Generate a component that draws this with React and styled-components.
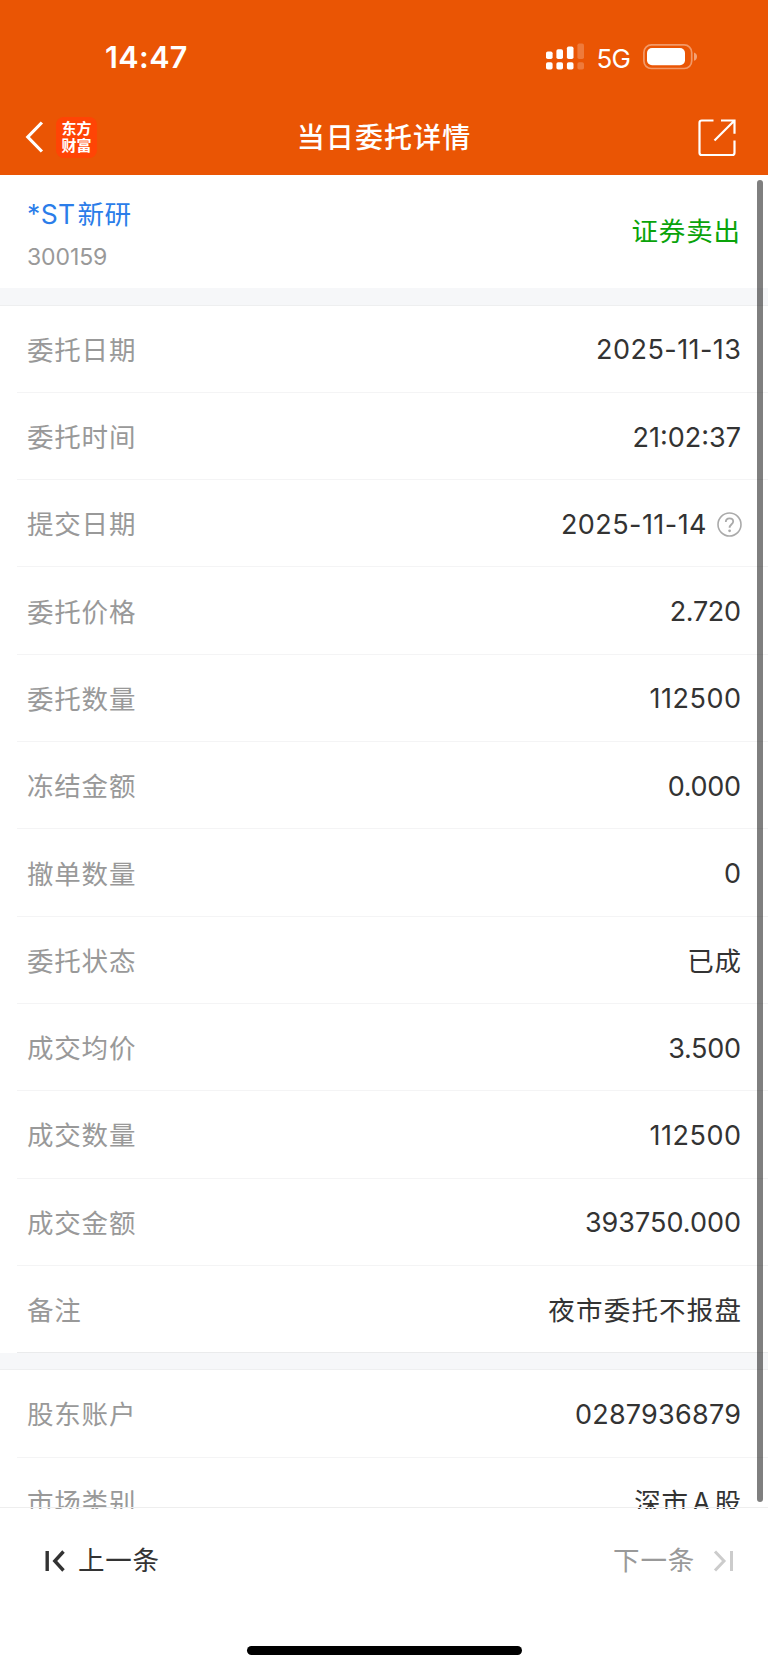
import React from "react";
import styled, { createGlobalStyle } from "styled-components";

const Global = createGlobalStyle`
  * { box-sizing: border-box; }
  body { margin: 0; background: #fff; }
`;

const Screen = styled.div`
  position: relative;
  display: flex;
  flex-direction: column;
  width: 768px;
  height: 1669px;
  overflow: hidden;
  background: #fff;
  color: #333;
  font-family: Inter, "Noto Sans CJK SC", sans-serif;
`;

const Top = styled.header`
  flex: none;
  height: 175px;
  background: #ea5504;
  color: #fff;
`;

const StatusBar = styled.div`
  display: flex;
  align-items: center;
  justify-content: space-between;
  height: 114px;
  padding: 0 70px 0 105px;
`;

const Clock = styled.div`
  padding-bottom: 2px;
  font-size: 30.5px;
  font-weight: 600;
  letter-spacing: 0.4px;
`;

const StatusIcons = styled.div`
  display: flex;
  align-items: center;
`;

const Network = styled.span`
  margin: 3px 13px 0 11.5px;
  font-size: 26px;
  letter-spacing: -0.8px;
`;

const NavBar = styled.div`
  display: grid;
  grid-template-columns: 1fr auto 1fr;
  align-items: center;
  height: 46px;
  padding: 0 32px 0 25px;
`;

const NavLeft = styled.div`
  display: flex;
  align-items: center;
  gap: 12px;
`;

const Logo = styled.div`
  display: flex;
  flex-direction: column;
  align-items: center;
  justify-content: center;
  width: 41px;
  height: 41px;
  padding-bottom: 3px;
  border-radius: 8px;
  background: #ff4405;
  font: 700 15px/17px "Noto Sans CJK SC", sans-serif;
`;

const Title = styled.h1`
  margin: 2px 0 0 7px;
  font-size: 28px;
  font-weight: 500;
  line-height: 40px;
  letter-spacing: 1.1px;
`;

const NavRight = styled.div`
  display: flex;
  justify-content: flex-end;
`;

const Content = styled.main`
  flex: none;
  height: 1334px;
  overflow: hidden;
`;

const Stock = styled.section`
  display: flex;
  align-items: center;
  justify-content: space-between;
  height: 113.4px;
  padding: 0 27px;
`;

const StockInfo = styled.div`
  padding-top: 6px;
`;

const StockName = styled.div`
  display: flex;
  gap: 2px;
  color: #2b7de9;
  font-size: 26.5px;
  line-height: 38px;
  letter-spacing: 0.4px;
`;

const StockCode = styled.div`
  margin-top: 6px;
  color: #999;
  font-size: 23px;
  line-height: 36px;
  letter-spacing: -0.1px;
`;

const Side = styled.div`
  padding-bottom: 4px;
  color: #0aa30a;
  font-size: 26.5px;
  letter-spacing: 0.9px;
`;

const Strip = styled.div`
  height: 17.2px;
  background: #f6f7f9;
  border-bottom: 1px solid #eeeff0;
`;

const Row = styled.div`
  display: flex;
  align-items: center;
  justify-content: space-between;
  height: 87.3px;
  margin-left: 17px;
  padding: 0 27px 0 10px;
  border-bottom: 1px solid ${(p) => (p.$last ? "#eaebec" : "#f4f4f5")};
`;

const Label = styled.span`
  padding-bottom: 1px;
  color: #999;
  font-size: 26.5px;
  letter-spacing: 0.8px;
`;

const Value = styled.span`
  display: flex;
  align-items: center;
  gap: 10px;
  padding: ${(p) => (p.$cjk ? "0 0 1px" : "2px 0 0")};
  margin-right: ${(p) => (p.$help ? -1 : -p.$track)}px;
  font-size: ${(p) => (p.$cjk ? 26.5 : 27)}px;
  letter-spacing: ${(p) => p.$track}px;
  word-spacing: ${(p) => (p.$cjk ? "-5px" : "0")};
`;

const Footer = styled.footer`
  position: relative;
  flex: 1;
  display: flex;
  flex-direction: column;
  align-items: center;
  justify-content: space-between;
  padding-bottom: 14px;
`;

const Pager = styled.div`
  display: flex;
  align-items: center;
  justify-content: space-between;
  width: 100%;
  height: 104px;
  padding: 0 34px 0 45px;
`;

const PageButton = styled.button`
  display: flex;
  align-items: center;
  gap: ${(p) => p.$gap}px;
  padding: 0;
  border: 0;
  background: none;
  color: ${(p) => (p.$muted ? "#999" : "#333")};
  font-family: inherit;
  font-size: 26.5px;
  letter-spacing: 0.8px;
`;

const PageText = styled.span`
  padding-bottom: 5px;
`;

const HomeBar = styled.div`
  width: 275px;
  height: 9px;
  border-radius: 5px;
  background: #000;
`;

const ScrollThumb = styled.div`
  position: absolute;
  top: 180px;
  right: 5px;
  width: 6px;
  height: 1322px;
  border-radius: 3px;
  background: rgba(0, 0, 0, 0.5);
`;

const FooterLine = styled.div`
  position: absolute;
  top: -2px;
  left: 0;
  right: 0;
  height: 1px;
  background: #eee;
`;

const Signal = () => (
  <svg width="39" height="28" viewBox="0 0 39 28" fill="#fff">
    <rect x="0" y="8.5" width="6.6" height="7.5" rx="1.8" />
    <rect x="10.4" y="6.3" width="6.6" height="9.7" rx="1.8" />
    <rect x="20.9" y="3.4" width="6.6" height="12.6" rx="1.8" />
    <rect x="31.4" y="0.4" width="6.6" height="15.6" rx="1.8" opacity="0.22" />
    <rect x="0" y="19.3" width="6.6" height="7.3" rx="1.8" />
    <rect x="10.4" y="19.3" width="6.6" height="7.3" rx="1.8" />
    <rect x="20.9" y="19.3" width="6.6" height="7.3" rx="1.8" />
    <rect x="31.4" y="19.3" width="6.6" height="7.3" rx="1.8" opacity="0.22" />
  </svg>
);

const Battery = () => (
  <svg width="55" height="26" viewBox="0 0 55 26">
    <rect x="0.9" y="0.9" width="47.8" height="23.6" rx="7.5" fill="none" stroke="#fff" strokeOpacity="0.4" strokeWidth="1.7" />
    <rect x="4" y="4" width="38" height="17.3" rx="5" fill="#fff" />
    <path d="M51 8.6c2 .7 3 2.2 3 4.1s-1 3.4-3 4.1z" fill="#fff" opacity="0.45" />
  </svg>
);

const Back = () => (
  <svg width="19" height="32" viewBox="0 0 19 32" fill="none" stroke="#fff" strokeWidth="3.2">
    <path d="M16.9 1.5 2.8 16l14.1 14.5" />
  </svg>
);

const Share = () => (
  <svg width="39" height="39" viewBox="0 0 39 39" fill="none" stroke="#fff" strokeWidth="2.2">
    <path d="M16.5 2.5H4.8Q2.5 2.5 2.500 4.800V34.700Q2.500 37 4.800 37H35.200Q37.500 37 37.500 34.700V22.500" />
    <path d="M24 2.500H37.500V15.800M37 3 17.500 22.500" />
  </svg>
);

const Help = () => (
  <svg width="25" height="25" viewBox="0 0 25 25" fill="none" stroke="#aaa" strokeWidth="1.6">
    <circle cx="12.5" cy="12.5" r="11.5" />
    <path d="M8.8 9.9C8.8 7.7 10.3 6.3 12.5 6.3S16.2 7.6 16.2 9.6C16.2 12.2 12.6 12.4 12.6 15.7" strokeWidth="1.8" />
    <circle cx="12.6" cy="18.8" r="1.4" fill="#aaa" stroke="none" />
  </svg>
);

const PrevIcon = () => (
  <svg width="21" height="22" viewBox="0 0 21 22" fill="none" stroke="#333" strokeWidth="3.4">
    <path d="M2.2 1v20M18.5 1.5 9.8 11l8.7 9.5" />
  </svg>
);

const NextIcon = () => (
  <svg width="21" height="22" viewBox="0 0 21 22" fill="none" stroke="#ccc" strokeWidth="3">
    <path d="M18.5 1v20M2 1.5 11 11l-9 9.5" />
  </svg>
);

const orderRows = [
  { label: "委托日期", value: "2025-11-13", track: 0.45 },
  { label: "委托时间", value: "21:02:37" },
  { label: "提交日期", value: "2025-11-14", track: 0.45, help: true },
  { label: "委托价格", value: "2.720", track: -0.35 },
  { label: "委托数量", value: "112500", track: 0.5 },
  { label: "冻结金额", value: "0.000", track: -0.3 },
  { label: "撤单数量", value: "0" },
  { label: "委托状态", value: "已成", track: 0.8 },
  { label: "成交均价", value: "3.500", track: -0.3 },
  { label: "成交数量", value: "112500", track: 0.5 },
  { label: "成交金额", value: "393750.000" },
  { label: "备注", value: "夜市委托不报盘", track: 1.2 },
];

const accountRows = [
  { label: "股东账户", value: "0287936879", track: 0.25 },
  { label: "市场类别", value: "深市 A 股", track: 0.8 },
];

const Rows = ({ items }) =>
  items.map(({ label, value, track = 0, help }, i) => (
    <Row key={label} $last={i === items.length - 1}>
      <Label>{label}</Label>
      <Value $cjk={/[\u4e00-\u9fff]/.test(value)} $track={track} $help={help}>
        {value}
        {help && <Help />}
      </Value>
    </Row>
  ));

export default function App() {
  return (
    <Screen>
      <Global />
      <Top>
        <StatusBar>
          <Clock>14:47</Clock>
          <StatusIcons>
            <Signal />
            <Network>5G</Network>
            <Battery />
          </StatusIcons>
        </StatusBar>
        <NavBar>
          <NavLeft>
            <Back />
            <Logo>
              <span>东方</span>
              <span>财富</span>
            </Logo>
          </NavLeft>
          <Title>当日委托详情</Title>
          <NavRight>
            <Share />
          </NavRight>
        </NavBar>
      </Top>
      <Content>
        <Stock>
          <StockInfo>
            <StockName>
              <span>*ST</span>
              <span>新研</span>
            </StockName>
            <StockCode>300159</StockCode>
          </StockInfo>
          <Side>证券卖出</Side>
        </Stock>
        <Strip />
        <Rows items={orderRows} />
        <Strip />
        <Rows items={accountRows} />
      </Content>
      <Footer>
        <FooterLine />
        <Pager>
          <PageButton $gap={12}>
            <PrevIcon />
            <PageText>上一条</PageText>
          </PageButton>
          <PageButton $muted $gap={18}>
            <PageText>下一条</PageText>
            <NextIcon />
          </PageButton>
        </Pager>
        <HomeBar />
      </Footer>
      <ScrollThumb />
    </Screen>
  );
}
